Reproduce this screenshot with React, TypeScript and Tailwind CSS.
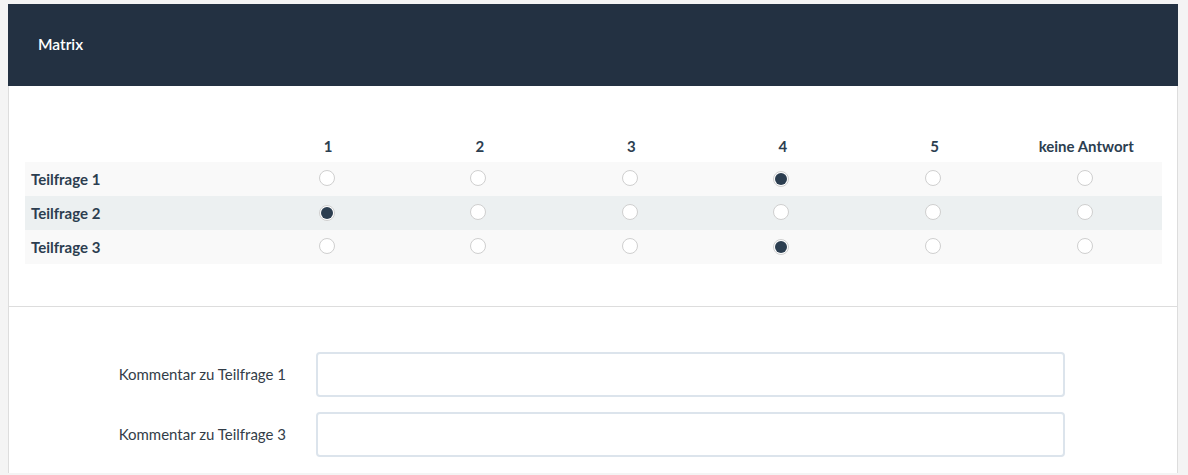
const cols = ['1', '2', '3', '4', '5', 'keine Antwort'];

const rows = [
  { label: 'Teilfrage 1', checked: 3 },
  { label: 'Teilfrage 2', checked: 0 },
  { label: 'Teilfrage 3', checked: 3 },
];

const Radio: React.FC<{ on: boolean }> = ({ on }) => (
  <span className="inline-flex w-4 h-4 items-center justify-center rounded-full border border-[#cfcfcf] bg-white">
    {on && <span className="block w-3 h-3 rounded-full bg-[#2c3e50]" />}
  </span>
);

export default function App() {
  return (
    <div className="min-h-[475px] bg-[#f4f4f4] pt-1 pl-2 pr-[10px] pb-[3px] font-['Lato',sans-serif] text-[15px] text-[#2c3e50]">
      <div className="bg-white border-x border-[#dddddd]">
        <div className="h-[82px] bg-[#233142] flex items-center pl-[30px] -mx-px">
          <h3 className="text-white text-[15.5px] font-semibold">Matrix</h3>
        </div>

        <div className="pt-[44px] pb-[42px] pl-4 pr-[15px] border-b border-[#dddddd]">
          <table className="w-full border-collapse table-fixed">
            <thead>
              <tr className="h-8">
                <th className="w-[20%]" />
                {cols.map((c) => (
                  <th key={c} className="text-center font-bold">
                    {c}
                  </th>
                ))}
              </tr>
            </thead>
            <tbody>
              {rows.map((r, i) => (
                <tr key={r.label} className={i % 2 === 1 ? 'h-[34px] bg-[#ecf0f1]' : 'h-[34px] bg-[#f9f9f9]'}>
                  <td className="pl-[6px] font-bold">{r.label}</td>
                  {cols.map((c, j) => (
                    <td key={c} className="text-center align-middle">
                      <span className="inline-flex pt-[3px] -ml-[3px]">
                        <Radio on={r.checked === j} />
                      </span>
                    </td>
                  ))}
                </tr>
              ))}
            </tbody>
          </table>
        </div>

        <div className="pt-[45px] pb-4 flex flex-col gap-[15px]">
          {['Kommentar zu Teilfrage 1', 'Kommentar zu Teilfrage 3'].map((l) => (
            <div key={l} className="flex items-center">
              <label className="w-[277px] text-right text-[#333d48]">{l}</label>
              <input
                type="text"
                className="ml-[30px] w-[749px] h-[45px] border-2 border-[#dce4ec] rounded-[4px] px-3 outline-none"
              />
            </div>
          ))}
        </div>
      </div>
    </div>
  );
}
